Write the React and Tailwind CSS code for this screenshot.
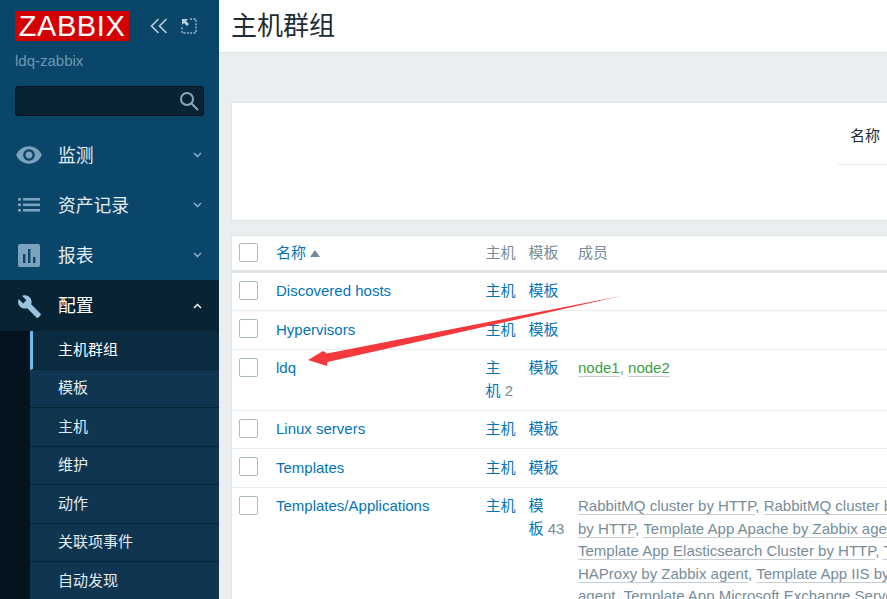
import React from "react";
import { MdVisibility, MdBuild } from "react-icons/md";

function Chevron({ up }) {
  return (
    <svg width="9" height="6" viewBox="0 0 9 6" fill="none" stroke={up ? "#ffffff" : "#8fb3c9"} strokeWidth="1.4">
      <path d={up ? "M1 5 L4.5 1.5 L8 5" : "M1 1 L4.5 4.5 L8 1"} />
    </svg>
  );
}

function ListIcon() {
  return (
    <svg width="22" height="14" viewBox="0 0 22 14" fill="#7ba3bd">
      <rect x="0" y="0" width="3" height="2.6" />
      <rect x="0" y="5.5" width="3" height="2.6" />
      <rect x="0" y="11" width="3" height="2.6" />
      <rect x="5" y="0" width="17" height="2.6" />
      <rect x="5" y="5.5" width="17" height="2.6" />
      <rect x="5" y="11" width="17" height="2.6" />
    </svg>
  );
}

function BarsIcon() {
  return (
    <svg width="22" height="23" viewBox="0 0 22 23">
      <rect x="0" y="0" width="22" height="23" rx="2" fill="#7ba3bd" />
      <rect x="5" y="10" width="2.4" height="9" fill="#0a466a" />
      <rect x="10" y="5" width="2.4" height="14" fill="#0a466a" />
      <rect x="15" y="13" width="2.4" height="6" fill="#0a466a" />
    </svg>
  );
}

function MenuItem({ icon, label, active }) {
  return (
    <div className={`h-[50px] flex items-center pl-[15px] pr-[17px] ${active ? "bg-[#082334] text-white" : "text-[#e4edf2]"}`}>
      <div className="w-[28px] flex justify-center shrink-0">{icon}</div>
      <span className={`ml-[15px] text-[17.75px] flex-1 ${active ? "" : "pt-[2px]"}`}>{label}</span>
      <Chevron up={active} />
    </div>
  );
}

function SubItem({ label, active }) {
  return (
    <div className={`h-[38.5px] flex items-center text-[15px] border-b border-[#082334] ${active ? "bg-[#0a2b40] text-white border-l-[3px] border-l-[#69bdf0] pl-[25px]" : "pl-[28px] bg-[#0f3551] text-[#e4edf2]"}`}>
      {label}
    </div>
  );
}

function Check() {
  return <div className="w-[19px] h-[19px] rounded-[2px] border border-[#acbbc2] bg-white shrink-0" />;
}

function Row({ name, host, tmpl, className, children, low }) {
  const pt = low ? "pt-[8px]" : "pt-[7px]";
  return (
    <div className={`flex items-start pl-[7px] border-b border-[#ebeef0] bg-white ${className}`}>
      <div className="w-[37px] shrink-0 pt-[8px]"><Check /></div>
      <div className={`w-[209.5px] shrink-0 text-[#0275b8] leading-[22.5px] ${pt}`}>{name}</div>
      <div className={`w-[43px] shrink-0 pr-[10px] text-[#0275b8] leading-[22.5px] ${pt}`}>{host}</div>
      <div className={`w-[49.5px] shrink-0 pr-[12px] text-[#0275b8] leading-[22.5px] ${pt}`}>{tmpl}</div>
      <div className="flex-1 min-w-0 overflow-hidden pt-[7px] leading-[22.5px] whitespace-nowrap">{children}</div>
    </div>
  );
}

function G({ children }) {
  return <span className="text-[#768d99] border-b border-[#c5cfd4]">{children}</span>;
}

function Sep() {
  return <span className="text-[#768d99]">, </span>;
}

export default function App() {
  return (
    <div
      className="relative w-[887px] h-[599px] overflow-hidden flex bg-[#ebeef0] text-[15px]"
      style={{ fontFamily: '"Liberation Sans","Noto Sans CJK SC",sans-serif' }}
    >
      <aside className="w-[219px] shrink-0 bg-[#0a466a] flex flex-col h-[599px] overflow-hidden">
        <div className="flex items-center pl-[15px] pt-[11px] shrink-0">
          <div className="w-[114px] h-[30px] bg-[#d40000] text-white text-[29px] leading-[30px] text-center tracking-[0.6px] overflow-hidden">ZABBIX</div>
          <svg className="ml-[21px]" width="18" height="16" viewBox="0 0 18 16" fill="none" stroke="#bcd0dc" strokeWidth="1.6">
            <path d="M8.5 1 L1.5 8 L8.5 15 M16.5 1 L9.5 8 L16.5 15" />
          </svg>
          <svg className="ml-[13px]" width="16" height="16" viewBox="0 0 16 16" fill="none" stroke="#9fb9c9" strokeWidth="1.4">
            <path d="M9 1 H15 V15 H1 V8" strokeDasharray="2 1.4" />
            <path d="M1 1 H7 L5 3 L8 6 L6 8 L3 5 L1 7 Z" fill="#bcd0dc" stroke="none" />
          </svg>
        </div>
        <div className="pl-[15px] mt-[11px] h-[18px] leading-[18px] text-[#6f99b3] shrink-0">ldq-zabbix</div>
        <div className="ml-[15px] mt-[16px] w-[189px] h-[30px] shrink-0 bg-[#082334] border border-[#04131d] rounded-[3px] flex items-center justify-end pr-[4px]">
          <svg width="20" height="20" viewBox="0 0 20 20" fill="none" stroke="#8aa9bc" strokeWidth="2">
            <circle cx="8" cy="8" r="6" />
            <path d="M12.5 12.5 L19 19" />
          </svg>
        </div>
        <div className="mt-[14px] shrink-0">
          <MenuItem label="监测" icon={<MdVisibility size={30} color="#7ba3bd" />} />
          <MenuItem label="资产记录" icon={<ListIcon />} />
          <MenuItem label="报表" icon={<BarsIcon />} />
          <div className="h-px bg-[#082334]" />
          <MenuItem label="配置" active icon={<MdBuild size={25} color="#9cc3dc" />} />
        </div>
        <div className="flex shrink-0">
          <div className="w-[30px] bg-[#04131d] shrink-0" />
          <div className="flex-1">
            <SubItem label="主机群组" active />
            <SubItem label="模板" />
            <SubItem label="主机" />
            <SubItem label="维护" />
            <SubItem label="动作" />
            <SubItem label="关联项事件" />
            <SubItem label="自动发现" />
          </div>
        </div>
      </aside>

      <main className="flex-1 min-w-0 flex flex-col">
        <header className="h-[53px] shrink-0 bg-white border-b border-[#dfe4e7] flex items-center pl-[12px] text-[26px] text-[#1f2c33]">
          <span>主机群组</span>
        </header>
        <section className="ml-[12px] mt-[49px] h-[119px] shrink-0 bg-white border border-[#dfe4e7] border-r-0 relative">
          <div className="absolute left-[618px] top-[22px] text-[#1f2c33]">名称</div>
          <div className="absolute left-[606px] top-[61px] right-0 h-px bg-[#ebeef0]" />
        </section>
        <section className="ml-[12px] mt-[14px] flex-1 min-h-0 border-t border-l border-[#dfe4e7] bg-white overflow-hidden">
          <div className="flex items-start pl-[7px] h-[37px] border-b-[3px] border-[#dfe4e7] text-[#768d99]">
            <div className="w-[37px] shrink-0 pt-[7px]"><Check /></div>
            <div className="w-[209.5px] shrink-0 pt-[6px] leading-[22.5px] text-[#0275b8] flex items-center">
              名称
              <svg className="ml-[4px] mt-[1px]" width="10" height="7" viewBox="0 0 10 7" fill="#768d99"><path d="M0 7 L5 0 L10 7 Z" /></svg>
            </div>
            <div className="w-[43px] shrink-0 pt-[6px] leading-[22.5px]">主机</div>
            <div className="w-[49.5px] shrink-0 pt-[6px] leading-[22.5px]">模板</div>
            <div className="pt-[6px] leading-[22.5px]">成员</div>
          </div>
          <Row name="Discovered hosts" host="主机" tmpl="模板" className="h-[38px]" />
          <Row low name="Hypervisors" host="主机" tmpl="模板" className="h-[39px]" />
          <Row name="ldq" host={<>主机{"\u00a0"}<span className="text-[#768d99]">2</span></>} tmpl="模板" className="h-[61px]">
            <span className="text-[#429e47] border-b border-[#c5cfd4]">node1</span><Sep /><span className="text-[#429e47] border-b border-[#c5cfd4]">node2</span>
          </Row>
          <Row name="Linux servers" host="主机" tmpl="模板" className="h-[38px]" />
          <Row low name="Templates" host="主机" tmpl="模板" className="h-[39px]" />
          <Row name="Templates/Applications" host="主机" tmpl={<>模板{"\u00a0"}<span className="text-[#768d99]">43</span></>} className="h-[120px]">
            <div><G>RabbitMQ cluster by HTTP</G><Sep /><G>RabbitMQ cluster by Zabbix agent</G></div>
            <div><G>by HTTP</G><Sep /><G>Template App Apache by Zabbix agent</G></div>
            <div><G>Template App Elasticsearch Cluster by HTTP</G><Sep /><G>Template App</G></div>
            <div><G>HAProxy by Zabbix agent</G><Sep /><G>Template App IIS by Zabbix</G></div>
            <div><G>agent</G><Sep /><G>Template App Microsoft Exchange Server</G></div>
          </Row>
        </section>
      </main>

      <svg className="absolute left-0 top-0 pointer-events-none" width="887" height="599" viewBox="0 0 887 599">
        <path d="M621 296 L327 353.5 L323 351 L308 360 L327 366 L327.5 362 Z" fill="#f5383b" />
      </svg>
    </div>
  );
}
